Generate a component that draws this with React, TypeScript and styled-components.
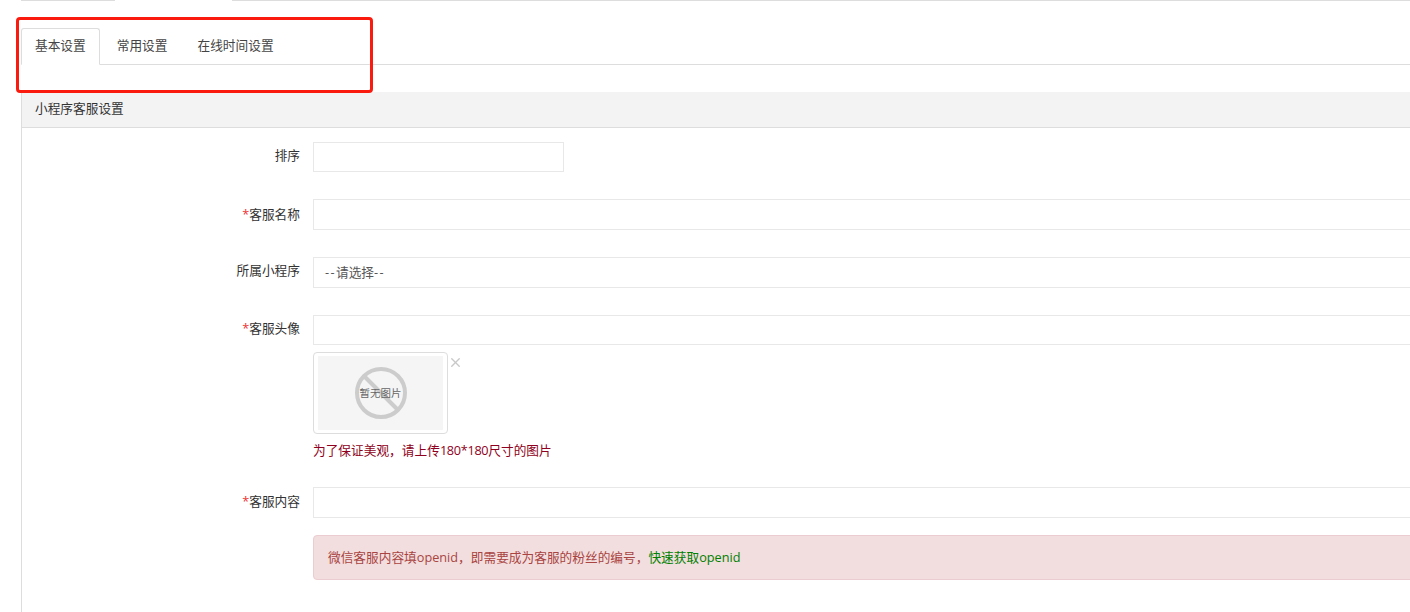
import styled, { createGlobalStyle } from "styled-components";
import { X } from "lucide-react";

const GlobalStyle = createGlobalStyle`
  html, body {
    margin: 0;
    padding: 0;
    overflow: hidden;
    background: #fff;
  }

  * {
    box-sizing: border-box;
  }
`

export default function App() {
    return <Page>
        <GlobalStyle/>
        <TopRule>
            <TopSegment $width={94}/>
            <TopGap/>
            <TopSegment $grow/>
        </TopRule>

        <Tabs>
            <Tab $active>基本设置</Tab>
            <Tab>常用设置</Tab>
            <Tab>在线时间设置</Tab>
        </Tabs>

        <Panel>
            <PanelHeading>小程序客服设置</PanelHeading>
            <PanelBody>
                <Row $gap={27}>
                    <Label $top={4}>排序</Label>
                    <Input $short/>
                </Row>
                <Row $gap={27}>
                    <Label $top={6}><Star>*</Star>客服名称</Label>
                    <Input $tall/>
                </Row>
                <Row $gap={27}>
                    <Label $top={4}>所属小程序</Label>
                    <Select $tall><span><Dash>--</Dash>请选择<Dash>--</Dash></span></Select>
                </Row>
                <Row $gap={7}>
                    <Label $top={4}><Star>*</Star>客服头像</Label>
                    <Input/>
                </Row>
                <Row $gap={28}>
                    <Label $top={0}/>
                    <Field>
                        <ThumbRow>
                            <Thumbnail>
                                <Placeholder>
                                    <NoImage>
                                        <svg width="54" height="54" viewBox="0 0 54 54">
                                            <circle cx="27" cy="27" r="24" fill="none" stroke="#ccc" strokeWidth="4"/>
                                            <path d="M10 10 L44 44" stroke="#ccc" strokeWidth="4"/>
                                        </svg>
                                        <NoImageText>暂无图片</NoImageText>
                                    </NoImage>
                                </Placeholder>
                            </Thumbnail>
                            <RemoveIcon size={15} color="#c8c8c8" strokeWidth={2.2}/>
                        </ThumbRow>
                        <HelpText>为了保证美观，请上传<Digits>180*180</Digits>尺寸的图片</HelpText>
                    </Field>
                </Row>
                <Row $gap={17}>
                    <Label $top={5}><Star>*</Star>客服内容</Label>
                    <Input $tall/>
                </Row>
                <Row $gap={0}>
                    <Label $top={0}/>
                    <Alert>
                        <span>微信客服内容填openid，即需要成为客服的粉丝的编号，<AlertLink>快速获取openid</AlertLink></span>
                    </Alert>
                </Row>
            </PanelBody>
        </Panel>

        <Highlight/>
    </Page>
}

const Page = styled.div`
  position: relative;
  width: 1520px;
  height: 612px;
  padding-left: 21px;
  overflow: hidden;
  font-family: "Open Sans", "Noto Sans CJK SC", sans-serif;
  font-size: 12.7px;
  color: #333;
`

const TopRule = styled.div`
  display: flex;
  height: 1px;
  margin-bottom: 27px;
`

const TopSegment = styled.div<{ $width?: number; $grow?: boolean }>`
  height: 1px;
  background: #ddd;
  width: ${({$width}) => $width ? `${$width}px` : "auto"};
  flex: ${({$grow}) => $grow ? 1 : "none"};
`

const TopGap = styled.div`
  width: 117px;
`

const Tabs = styled.div`
  display: flex;
  height: 37px;
  border-bottom: 1px solid #ddd;
  margin-bottom: 27px;
`

const Tab = styled.div<{ $active?: boolean }>`
  height: ${({$active}) => $active ? "37px" : "36px"};
  padding: 0 ${({$active}) => $active ? "13px 4px" : "16px 3px"};
  margin-right: ${({$active}) => $active ? "0" : "-4px"};
  display: flex;
  align-items: center;
  color: #444;
  background: #fff;
  border: 1px solid ${({$active}) => $active ? "#ddd" : "transparent"};
  border-bottom-color: ${({$active}) => $active ? "#fff" : "transparent"};
  border-radius: 3px 3px 0 0;
`

const Panel = styled.div`
  border-left: 1px solid #ddd;
  height: 520px;
`

const PanelHeading = styled.div`
  height: 36px;
  padding: 0 13px 4px;
  display: flex;
  align-items: center;
  background: #f3f3f3;
  border-bottom: 1px solid #ddd;
`

const PanelBody = styled.div`
  padding-top: 14px;
  display: flex;
  flex-direction: column;
`

const Row = styled.div<{ $gap: number }>`
  display: flex;
  gap: 13px;
  margin-bottom: ${({$gap}) => $gap}px;
`

const Label = styled.div<{ $top: number }>`
  flex: none;
  width: 278px;
  padding-top: ${({$top}) => $top}px;
  text-align: right;
  line-height: 18px;
  color: #333;
`

const Star = styled.span`
  color: #e33;
`

const Field = styled.div`
  flex: 1;
  min-width: 0;
`

const Input = styled.div<{ $short?: boolean; $tall?: boolean }>`
  flex: ${({$short}) => $short ? "none" : 1};
  width: ${({$short}) => $short ? "251px" : "auto"};
  height: ${({$tall}) => $tall ? "31px" : "30px"};
  background: #fff;
  border: 1px solid #e8e8e8;
`

const Select = styled(Input)`
  display: flex;
  align-items: center;
  padding: 0 0 3px 11px;
  color: #555;
`

const Dash = styled.span`
  letter-spacing: 1.4px;
`

const ThumbRow = styled.div`
  display: flex;
  align-items: flex-start;
  margin-bottom: 7px;
`

const Thumbnail = styled.div`
  width: 135px;
  height: 82px;
  padding: 3px 4px;
  background: #fff;
  border: 1px solid #ddd;
  border-radius: 4px;
`

const Placeholder = styled.div`
  height: 100%;
  display: flex;
  align-items: center;
  justify-content: center;
  background: #f5f5f5;
`

const NoImage = styled.div`
  position: relative;
  width: 54px;
  height: 54px;

  svg {
    display: block;
  }
`

const NoImageText = styled.span`
  position: absolute;
  inset: 0 0 2px;
  display: flex;
  align-items: center;
  justify-content: center;
  white-space: nowrap;
  font-size: 10.5px;
  color: #666;
`

const RemoveIcon = styled(X)`
  margin: 3px 0 0 0;
`

const HelpText = styled.div`
  line-height: 18px;
  color: #8f0020;
`

const Digits = styled.span`
  letter-spacing: -0.3px;
`

const Alert = styled.div`
  flex: 1;
  height: 45px;
  padding: 0 14px 3px;
  display: flex;
  align-items: center;
  color: #a94442;
  background: #f2dede;
  border: 1px solid #ebccd1;
  border-radius: 4px;
`

const AlertLink = styled.span`
  color: #008000;
`

// the red annotation box drawn on top of the screenshot
const Highlight = styled.div`
  position: absolute;
  left: 16px;
  top: 17px;
  width: 357px;
  height: 76px;
  border: 3px solid #fb1a0e;
  border-radius: 4px;
  pointer-events: none;
`
